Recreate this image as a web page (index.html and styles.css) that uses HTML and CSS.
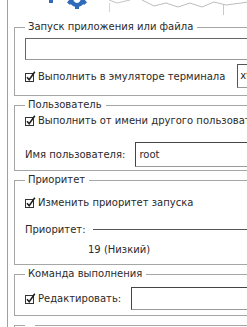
FILE: index.html
```html
<!DOCTYPE html>
<html lang="ru">
<head>
<meta charset="utf-8">
<link rel="stylesheet" href="styles.css">
</head>
<body>
<div class="frame">
  <div class="banner">
    <span class="dash"></span>
    <svg class="gear" width="26" height="10" viewBox="0 0 26 10">
      <path d="M13 -9 A8 8 0 1 1 12.99 -9 Z M13 -4 A3.5 3.5 0 1 0 13.01 -4 Z" fill="#2f6bb8" fill-rule="evenodd"/>
      <path d="M11 5 L15 5 L15 9 L11 9 Z" fill="#2f6bb8"/>
      <path d="M17.5 2 L20.5 -0.5 L23 2.5 L20 5 Z" fill="#2f6bb8"/>
      <path d="M8.5 2 L5.5 -0.5 L3 2.5 L6 5 Z" fill="#2f6bb8"/>
    </svg>
    <svg class="hex" width="140" height="18" viewBox="0 0 140 18">
      <polyline points="0,0 8,3 21,0" fill="none" stroke="#c4c4c4"/>
      <polyline points="33,0 45,6 57,3 69,7 81,3 93,7 105,2 117,5 140,2" fill="none" stroke="#bdbdbd"/>
      <line x1="0.5" y1="3" x2="0.5" y2="12" stroke="#d4d4d4"/>
      <line x1="114.5" y1="5" x2="114.5" y2="15" stroke="#c8c8c8"/>
    </svg>
  </div>

  <fieldset class="group">
    <legend>Запуск приложения или файла</legend>
    <div class="field-wide"></div>
    <div class="row row-term">
      <span class="check"><svg width="11" height="11" viewBox="0 0 11 11"><rect x="0.5" y="2.5" width="8" height="8" fill="#fff" stroke="#333"/><path d="M2 6.2 L4.2 8.8 L9.8 0.8" fill="none" stroke="#222" stroke-width="1.6"/></svg></span>
      <span class="label">Выполнить в эмуляторе терминала</span>
      <span class="term-box">xterm</span>
    </div>
  </fieldset>

  <fieldset class="group group-user">
    <legend>Пользователь</legend>
    <div class="row row-check">
      <span class="check"><svg width="11" height="11" viewBox="0 0 11 11"><rect x="0.5" y="2.5" width="8" height="8" fill="#fff" stroke="#333"/><path d="M2 6.2 L4.2 8.8 L9.8 0.8" fill="none" stroke="#222" stroke-width="1.6"/></svg></span>
      <span class="label">Выполнить от имени другого пользователя</span>
    </div>
    <div class="row row-user">
      <span class="label">Имя пользователя:</span>
      <span class="field">root</span>
    </div>
  </fieldset>

  <fieldset class="group group-prio">
    <legend>Приоритет</legend>
    <div class="row row-check row-check-prio">
      <span class="check"><svg width="11" height="11" viewBox="0 0 11 11"><rect x="0.5" y="2.5" width="8" height="8" fill="#fff" stroke="#333"/><path d="M2 6.2 L4.2 8.8 L9.8 0.8" fill="none" stroke="#222" stroke-width="1.6"/></svg></span>
      <span class="label">Изменить приоритет запуска</span>
    </div>
    <div class="row row-prio">
      <span class="label">Приоритет:</span>
      <span class="slider"></span>
    </div>
    <div class="prio-value">19 (Низкий)</div>
  </fieldset>

  <fieldset class="group">
    <legend>Команда выполнения</legend>
    <div class="row row-cmd">
      <span class="check"><svg width="11" height="11" viewBox="0 0 11 11"><rect x="0.5" y="2.5" width="8" height="8" fill="#fff" stroke="#333"/><path d="M2 6.2 L4.2 8.8 L9.8 0.8" fill="none" stroke="#222" stroke-width="1.6"/></svg></span>
      <span class="label">Редактировать:</span>
      <span class="field"></span>
    </div>
  </fieldset>

  <fieldset class="group">
    <legend>&nbsp;</legend>
  </fieldset>
</div>
</body>
</html>
```

FILE: styles.css
```css
html, body {
  margin: 0;
  padding: 0;
  background: #ffffff;
  overflow: hidden;
}

body {
  font-family: "DejaVu Sans", sans-serif;
  font-size: 10px;
  color: #2a2a2a;
  width: 247px;
  height: 327px;
}

.frame {
  margin-left: 7px;
  border-left: 1px solid #a0a0a0;
  padding-left: 6px;
  width: 340px;
}

.banner {
  height: 21px;
  display: flex;
  align-items: flex-start;
}

.dash {
  display: block;
  width: 4px;
  height: 3px;
  margin-left: 35px;
  background: #2f6bb8;
}

.gear {
  display: block;
  margin-left: 11px;
  flex: none;
}

.hex {
  display: block;
  margin-left: 19px;
  flex: none;
}

.group {
  margin: 0 0 3px 0;
  padding: 0 0 5px 10px;
  border: 1px solid #a6a6a6;
  min-width: 0;
}

.group-user {
  padding-bottom: 3px;
}

.group-prio {
  padding-bottom: 6px;
}

.group legend {
  margin-left: 0;
  padding: 0 4px 0 3px;
  line-height: 12px;
  height: 12px;
}

.row {
  display: flex;
  align-items: center;
}

.check {
  width: 11px;
  height: 11px;
  margin-right: 2px;
  display: flex;
}

.check svg {
  display: block;
}

.field-wide {
  margin-top: 5px;
  height: 20px;
  border: 1px solid #8a8a8a;
  border-color: #666 #9a9a9a #9a9a9a #666;
}

.row-term {
  height: 24px;
  margin-top: 4px;
  margin-bottom: 2px;
}

.term-box {
  margin-left: 12px;
  height: 22px;
  line-height: 22px;
  padding-left: 2px;
  border: 1px solid #666;
  border-color: #555 #999 #999 #555;
  width: 60px;
}

.row-check {
  height: 16px;
  margin-top: 1px;
}

.row-check-prio {
  margin-top: 8px;
}

.row-user {
  margin-top: 14px;
  height: 25px;
}

.row-user .field {
  margin-left: 10px;
}

.field {
  flex: 1;
  height: 23px;
  line-height: 23px;
  padding-left: 3px;
  border: 1px solid #777;
  border-color: #444 #9a9a9a #9a9a9a #444;
}

.row-prio {
  margin-top: 12px;
  height: 14px;
}

.slider {
  flex: 1;
  margin-left: 7px;
  height: 1px;
  background: #555;
}

.prio-value {
  margin-top: 8px;
  padding-left: 63px;
  line-height: 12px;
  height: 14px;
}

.row-cmd {
  margin-top: 6px;
  height: 24px;
}

.row-cmd .field {
  margin-left: 10px;
  height: 21px;
}
```
